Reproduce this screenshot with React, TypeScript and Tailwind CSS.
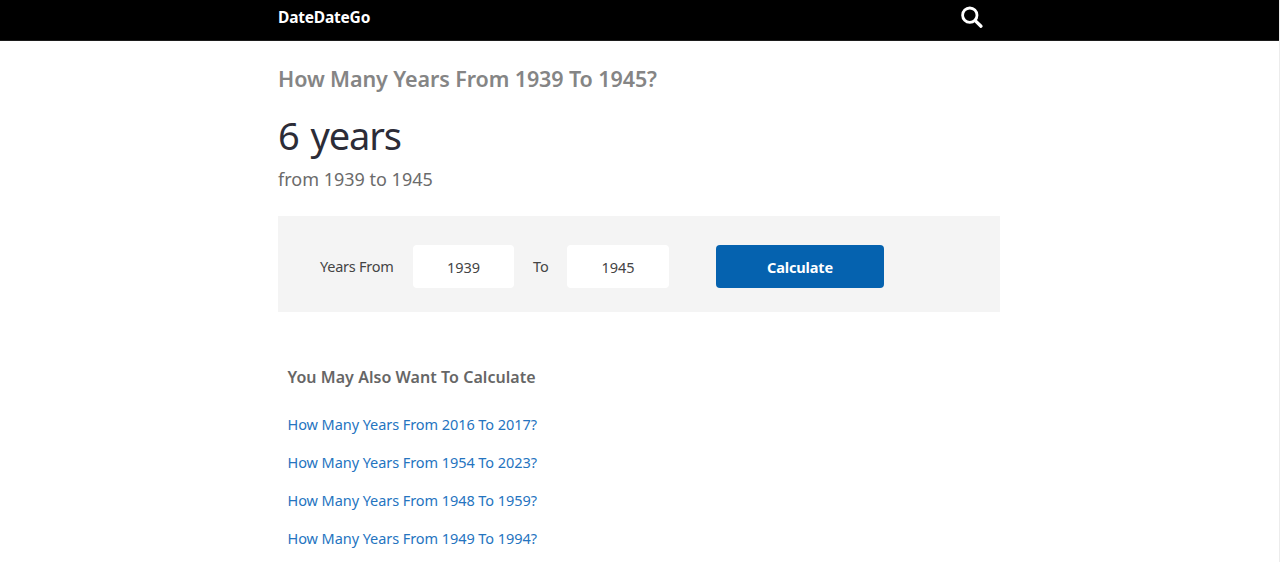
import { FC, useState } from 'react';

interface YearInputProps {
  label: string;
  value: string;
  onChange: (value: string) => void;
  className?: string;
}

const related = [
  { from: 2016, to: 2017 },
  { from: 1954, to: 2023 },
  { from: 1948, to: 1959 },
  { from: 1949, to: 1994 },
];

const SearchIcon: FC = () => (
  <svg width="24" height="24" viewBox="0 0 24 24" fill="none" stroke="currentColor">
    <circle cx="9.8" cy="9.2" r="7.2" strokeWidth="2.8" />
    <path d="M15.2 14.6L21 20.2" strokeWidth="3.3" strokeLinecap="round" />
  </svg>
);

const Header: FC = () => (
  <header className="h-[41px] bg-black border-b border-[#1c1c1c]">
    <div className="w-[722px] ml-[278px] flex justify-between">
      <a href="#" className="mt-[6px] h-[22px] text-[15.5px] leading-[22px] font-bold text-white tracking-[-0.2px]">
        DateDateGo
      </a>
      <button aria-label="Search" className="mt-[6px] mr-[16px] h-6 text-white">
        <SearchIcon />
      </button>
    </div>
  </header>
);

const YearInput: FC<YearInputProps> = ({ label, value, onChange, className }) => (
  <input
    aria-label={label}
    value={value}
    onChange={(e) => onChange(e.target.value)}
    className={`h-[43px] shrink-0 rounded-[4px] bg-white text-center text-[14.5px] text-[#444] tracking-[-0.1px] pt-[2px] ${className}`}
  />
);

const App: FC = () => {
  const [from, setFrom] = useState('1939');
  const [to, setTo] = useState('1945');
  const [result, setResult] = useState({ from: 1939, to: 1945 });

  const calculate = () => setResult({ from: Number(from), to: Number(to) });

  return (
    <div className="h-[562px] overflow-hidden flex bg-white font-['Noto_Sans',sans-serif]">
      <div className="flex-1">
        <Header />
        <main className="w-[722px] ml-[278px]">
          <h1 className="mt-[22px] h-8 text-[21.5px] leading-8 font-semibold text-[#858585] tracking-[-0.1px] whitespace-nowrap">
            How Many Years From {result.from} To {result.to}?
          </h1>
          <div className="mt-[17px] h-12 text-[38px] leading-[46px] font-normal text-[#2c2c37] tracking-[-1.1px] [word-spacing:3px] whitespace-nowrap">
            {Math.abs(result.to - result.from)} years
          </div>
          <p className="mt-[7px] h-6 text-[18px] leading-6 text-[#6b6b6b] whitespace-nowrap">
            from {result.from} to {result.to}
          </p>

          <div className="mt-[25px] h-[96px] bg-[#f4f4f4] flex items-start pt-[29px] pl-[42px] text-[14.5px] leading-[43px] text-[#444]">
            <span className="w-[93px] shrink-0 tracking-[-0.25px] whitespace-nowrap">Years From</span>
            <YearInput label="From year" value={from} onChange={setFrom} className="w-[101px]" />
            <span className="w-[53px] shrink-0 pl-[19px]">To</span>
            <YearInput label="To year" value={to} onChange={setTo} className="w-[102px]" />
            <button
              onClick={calculate}
              className="ml-[47px] w-[168px] h-[43px] pt-[2px] rounded-[4px] bg-[#0562af] text-[14.5px] leading-[41px] font-bold text-white tracking-[-0.15px]"
            >
              Calculate
            </button>
          </div>

          <section className="mt-[53px] pl-[9.5px]">
            <h2 className="h-6 text-[16px] leading-6 font-semibold text-[#666] tracking-[0.05px] whitespace-nowrap">
              You May Also Want To Calculate
            </h2>
            <ul className="mt-[16px]">
              {related.map((item) => (
                <li
                  key={`${item.from}-${item.to}`}
                  className="h-[38px] text-[14.5px] leading-[38px] text-[#2574bf] tracking-[-0.07px] whitespace-nowrap"
                >
                  <a href="#">How Many Years From {item.from} To {item.to}?</a>
                </li>
              ))}
            </ul>
          </section>
        </main>
      </div>
      <div className="w-px bg-[#ececec]" />
    </div>
  );
};

export default App;
